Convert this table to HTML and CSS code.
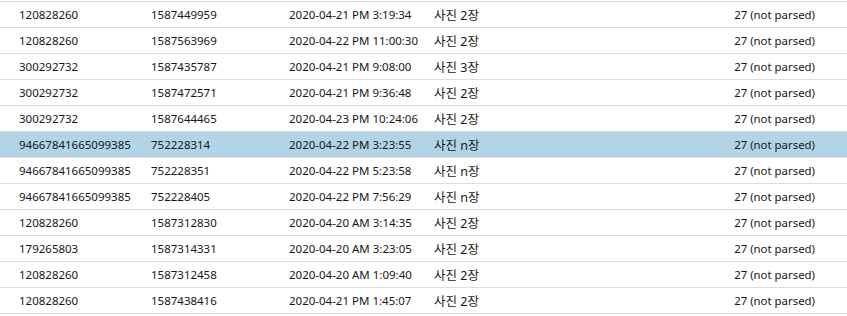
FILE: index.html
```html
<!DOCTYPE html>
<html lang="ko">
<head>
<meta charset="utf-8">
<link rel="stylesheet" href="styles.css">
</head>
<body>
<div class="list">
  <div class="row"><span>120828260</span><span>1587449959</span><span>2020-04-21 PM 3:19:34</span><span class="ko">사진 2장</span><span class="num">27 (not parsed)</span></div>
  <div class="row"><span>120828260</span><span>1587563969</span><span>2020-04-22 PM 11:00:30</span><span class="ko">사진 2장</span><span class="num">27 (not parsed)</span></div>
  <div class="row"><span>300292732</span><span>1587435787</span><span>2020-04-21 PM 9:08:00</span><span class="ko">사진 3장</span><span class="num">27 (not parsed)</span></div>
  <div class="row"><span>300292732</span><span>1587472571</span><span>2020-04-21 PM 9:36:48</span><span class="ko">사진 2장</span><span class="num">27 (not parsed)</span></div>
  <div class="row"><span>300292732</span><span>1587644465</span><span>2020-04-23 PM 10:24:06</span><span class="ko">사진 2장</span><span class="num">27 (not parsed)</span></div>
  <div class="row selected"><span>94667841665099385</span><span>752228314</span><span>2020-04-22 PM 3:23:55</span><span class="ko">사진 n장</span><span class="num">27 (not parsed)</span></div>
  <div class="row"><span>94667841665099385</span><span>752228351</span><span>2020-04-22 PM 5:23:58</span><span class="ko">사진 n장</span><span class="num">27 (not parsed)</span></div>
  <div class="row"><span>94667841665099385</span><span>752228405</span><span>2020-04-22 PM 7:56:29</span><span class="ko">사진 n장</span><span class="num">27 (not parsed)</span></div>
  <div class="row"><span>120828260</span><span>1587312830</span><span>2020-04-20 AM 3:14:35</span><span class="ko">사진 2장</span><span class="num">27 (not parsed)</span></div>
  <div class="row"><span>179265803</span><span>1587314331</span><span>2020-04-20 AM 3:23:05</span><span class="ko">사진 2장</span><span class="num">27 (not parsed)</span></div>
  <div class="row"><span>120828260</span><span>1587312458</span><span>2020-04-20 AM 1:09:40</span><span class="ko">사진 2장</span><span class="num">27 (not parsed)</span></div>
  <div class="row"><span>120828260</span><span>1587438416</span><span>2020-04-21 PM 1:45:07</span><span class="ko">사진 2장</span><span class="num">27 (not parsed)</span></div>
</div>
</body>
</html>
```
FILE: styles.css
```css
html, body {
  margin: 0;
  background: #ffffff;
}
body {
  font-family: "Noto Sans", "Noto Sans CJK KR", sans-serif;
  font-size: 11.5px;
  color: #161616;
}
.list {
  padding-top: 1px;
}
.row {
  display: grid;
  grid-template-columns: 132px 138px 145px 1fr auto;
  align-items: center;
  height: 25px;
  padding: 0 32px 0 19px;
  border-top: 1px solid #dcdcdc;
  white-space: nowrap;
}
.row:last-child {
  border-bottom: 1px solid #dcdcdc;
}
.row.selected {
  background: #b3d4e6;
}
.ko {
  font-size: 12.5px;
}
.num {
  text-align: right;
  font-size: 11.4px;
}
```
